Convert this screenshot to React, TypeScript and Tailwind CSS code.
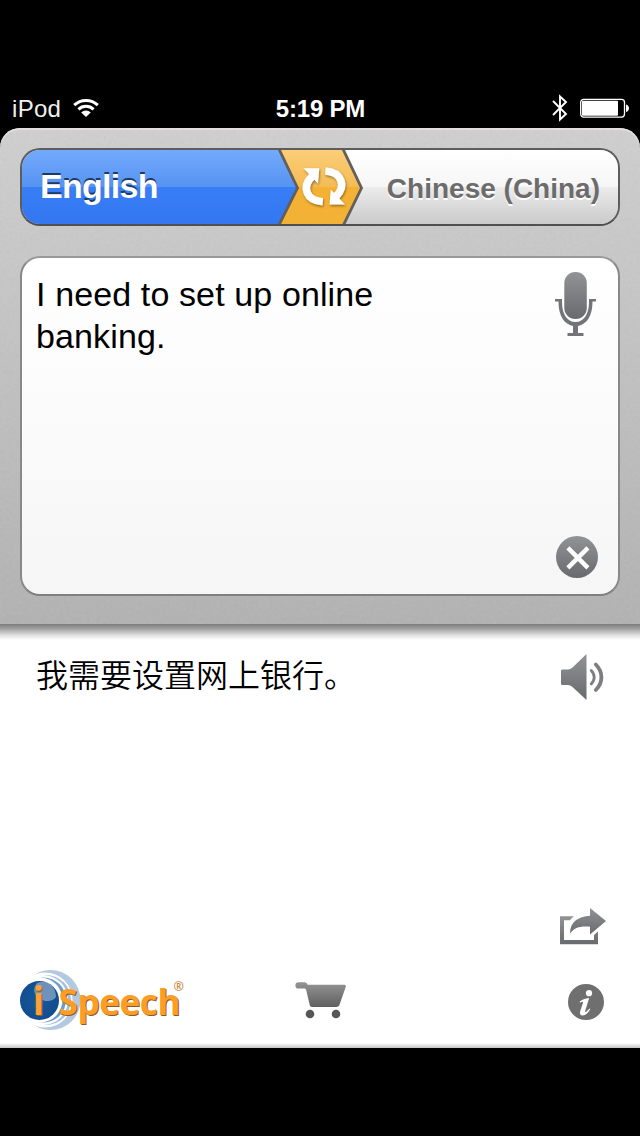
import type { ReactNode } from 'react'

const IconGradient = ({ id }: { id: string }) => (
  <linearGradient id={id} x1="0" y1="0" x2="0" y2="1">
    <stop offset="0" stopColor="#929395" />
    <stop offset="1" stopColor="#696a6d" />
  </linearGradient>
)

const StatusBar = () => {
  return (
    <header className="grid h-[40px] grid-cols-3 items-center text-[24px] leading-none text-white">
      <div className="flex items-center pl-[12px]">
        <span className="pt-[2px] tracking-[0.3px] text-[#f0f0f0]">iPod</span>
        <svg className="ml-[12px] h-[20px] w-[26px]" viewBox="0 0 26 20">
          <path d="M1.2 7.2a17 17 0 0 1 23.6 0" fill="none" stroke="#fff" strokeWidth="3" />
          <path d="M5.4 11.4a11 11 0 0 1 15.2 0" fill="none" stroke="#fff" strokeWidth="3" />
          <path d="M13 19l-4.8-4.5a7 7 0 0 1 9.6 0z" fill="#fff" />
        </svg>
      </div>

      <span className="pt-[2px] pl-[1px] text-center font-bold tracking-[-0.2px]">5:19 PM</span>

      <div className="flex items-center justify-end pr-[11px]">
        <svg className="h-[28px] w-[16px]" viewBox="0 0 16 28">
          <path
            d="M1 7l13 13-6 5.500V2.500l6 5.500L1 21"
            fill="none"
            stroke="#fff"
            strokeWidth="1.900"
          />
        </svg>
        <svg className="ml-[12px] h-[20px] w-[49px]" viewBox="0 0 49 20">
          <rect x="0.700" y="1.300" width="43.800" height="17.800" rx="3" fill="none" stroke="#fff" strokeWidth="1.300" />
          <rect x="2" y="2.700" width="36" height="15" rx="1" fill="#fff" />
          <path d="M46 6.500c4 1 4 6.600 0 7.600z" fill="#fff" />
        </svg>
      </div>
    </header>
  )
}

const SwapArrows = () => (
  <svg className="h-[74px] w-[86px] shrink-0" viewBox="0 0 86 74">
    <defs>
      <linearGradient id="blue" x1="0" y1="0" x2="0" y2="1">
        <stop offset="0" stopColor="#73aafc" />
        <stop offset="0.5" stopColor="#5693f1" />
        <stop offset="0.5" stopColor="#377ef7" />
        <stop offset="1" stopColor="#3477f0" />
      </linearGradient>
      <linearGradient id="silver" x1="0" y1="0" x2="0" y2="1">
        <stop offset="0" stopColor="#ffffff" />
        <stop offset="0.5" stopColor="#f6f6f6" />
        <stop offset="0.5" stopColor="#ececec" />
        <stop offset="1" stopColor="#cacaca" />
      </linearGradient>
      <linearGradient id="orange" x1="0" y1="0" x2="0" y2="1">
        <stop offset="0" stopColor="#fbce78" />
        <stop offset="0.5" stopColor="#f4bb55" />
        <stop offset="0.5" stopColor="#f4b133" />
        <stop offset="1" stopColor="#f2b237" />
      </linearGradient>
      <filter id="drop" x="-20%" y="-20%" width="140%" height="140%">
        <feDropShadow dx="0.800" dy="1.500" stdDeviation="0.800" floodColor="#6b4a10" floodOpacity="0.700" />
      </filter>
    </defs>
    <rect width="40" height="74" fill="url(#blue)" />
    <rect x="40" width="46" height="74" fill="url(#silver)" />
    <path d="M1.500 0h64l18 38-17.500 36H1.500l18-36z" fill="url(#orange)" />
    <path
      d="M0.500-2l19 40-19 38M64.500-2l19 40L65 76"
      fill="none"
      stroke="#625f5c"
      strokeWidth="2.800"
    />
    <g filter="url(#drop)" fill="none" stroke="#fff" strokeWidth="7.600">
      <path d="M44.800 51.800C28 50.500 23.500 37 34 26.500" />
      <path d="M47.400 21C64 22.300 68.500 36 58 46.500" />
      <path d="M25.500 18.200h15.800L40 33.500z" fill="#fff" stroke="none" />
      <path d="M67 54.600H51.500L52.800 39.500z" fill="#fff" stroke="none" />
    </g>
  </svg>
)

const LanguageBar = () => {
  return (
    <div className="flex h-[78px] overflow-hidden rounded-[20px] border-2 border-[#5d5d5d] border-b-[#505050]">
      <button className="w-[256px] bg-[linear-gradient(#73aafc_0%,#5693f1_50%,#377ef7_50%,#3477f0_100%)] pb-[3px] pl-[18px] text-left text-[34px] leading-[70px] font-bold tracking-[-0.7px] text-white [text-shadow:0_-2px_0_#1c3a68]">
        English
      </button>
      <SwapArrows />
      <button className="flex-1 bg-[linear-gradient(#ffffff_0%,#f6f6f6_50%,#ececec_50%,#cacaca_100%)] pt-[3px] pr-[18px] text-right text-[28px] leading-[71px] font-bold whitespace-nowrap text-[#6c6c6c] [text-shadow:0_2px_0_#ffffff]">
        Chinese (China)
      </button>
    </div>
  )
}

const MicIcon = () => (
  <svg className="mr-[2px] h-[66px] w-[42px]" viewBox="0 0 42 66">
    <defs>
      <IconGradient id="mic" />
    </defs>
    <rect x="10.300" y="1" width="22.500" height="47" rx="11" fill="url(#mic)" />
    <path d="M1 28h7v3c0 12 5 20 13.500 20S35 43 35 31v-3h7v2.500h-3.500C38.500 45 33 53 24 55v7h5.500v3h-16v-3H19v-7C10 53 4.500 45 4.500 30.500H1z" fill="#737477" />
  </svg>
)

const ClearIcon = () => (
  <svg className="h-[42px] w-[42px]" viewBox="0 0 42 42">
    <defs>
      <IconGradient id="clear" />
    </defs>
    <circle cx="21" cy="21" r="21" fill="url(#clear)" />
    <path d="M11.900 11.900l20 20M31.900 11.900l-20 20" stroke="#fff" strokeWidth="4.400" />
  </svg>
)

const SpeakerIcon = () => (
  <svg className="h-[48px] w-[44px]" viewBox="0 0 44 48">
    <defs>
      <IconGradient id="speaker" />
    </defs>
    <path d="M2.500 16.500H8c2 0 3.500-1 5-2.500L26.500 1v46L13 34.500c-1.500-1.500-3-2.500-5-2.500H2.500c-1 0-1.500-.5-1.500-1.500V18c0-1 .5-1.500 1.500-1.500z" fill="url(#speaker)" />
    <path d="M31.200 17.500c4 4 4 9.500 0 13.500" fill="none" stroke="#7d7e80" strokeWidth="2.800" strokeLinecap="round" />
    <path d="M35.800 11.500c7.500 7.500 7.500 18 0 25.500" fill="none" stroke="#7d7e80" strokeWidth="3.800" strokeLinecap="round" />
  </svg>
)

const ShareIcon = () => (
  <svg className="h-[37px] w-[47px]" viewBox="0 0 47 37">
    <defs>
      <IconGradient id="share" />
    </defs>
    <path
      d="M0 8.300h14c-1.800 1.200-3 2.500-3.800 3.900H4v19.900h30v-5l4-3.600v12.700H0z"
      fill="url(#share)"
    />
    <path d="M30 0l16 13-16 13.500v-7.700c-10-.8-15.500.8-20 6.700C10 14 18 8.500 30 7.800z" fill="url(#share)" />
  </svg>
)

const InfoIcon = () => (
  <svg className="h-[36px] w-[36px]" viewBox="0 0 36 36">
    <circle cx="18" cy="18" r="18" fill="#6f6f6f" />
    <circle cx="21" cy="9.200" r="3.100" fill="#fff" />
    <path
      d="M11.600 17.800c2.600-2.400 5.200-3.300 9.600-3.800l-4 12.700c-.4 1.400.4 1.500 1.400.7l2.900-3 .8.700c-2.200 4-4.700 6.400-7.600 6.400-2.400 0-3.300-1.500-2.500-4.200l2.700-8.400c.4-1.300-.5-1.500-2.900-.2z"
      fill="#fff"
    />
  </svg>
)

const CartIcon = () => (
  <svg className="h-[38px] w-[52px]" viewBox="0 0 52 38">
    <defs>
      <linearGradient id="cart" x1="0" y1="0" x2="0" y2="1">
        <stop offset="0" stopColor="#949494" />
        <stop offset="1" stopColor="#606060" />
      </linearGradient>
    </defs>
    <path d="M3.500 1.300h6c1.500 0 2.500 1.200 3.200 2.400h36.500c1.500 0 2 1 1.500 2.200l-6 17.400c-.6 1.800-1.700 2.700-3.500 2.700H18c-2 0-3-.8-3.400-2.600L11.300 9.500C11 8.100 10.500 7.500 9 7.500H3.500a3.100 3.100 0 0 1 0-6.200z" fill="url(#cart)" />
    <circle cx="15" cy="33" r="4.300" fill="#565656" />
    <circle cx="41" cy="33" r="4.300" fill="#565656" />
  </svg>
)

const Logo = () => (
  <svg className="h-[64px] w-[168px]" viewBox="0 0 168 64" fontFamily="'Open Sans', sans-serif">
    <defs>
      <radialGradient id="globe" cx="0.5" cy="0.5" r="0.55">
        <stop offset="0" stopColor="#17589c" />
        <stop offset="1" stopColor="#114c8d" />
      </radialGradient>
    </defs>
    <circle cx="30.500" cy="32" r="30" fill="#b3c9e1" />
    <circle cx="25" cy="32" r="27.500" fill="#fff" />
    <circle cx="26" cy="32" r="25" fill="#a3bfdb" />
    <circle cx="23" cy="32" r="25" fill="#fff" />
    <circle cx="23.500" cy="32" r="22.500" fill="#6f9cc6" />
    <circle cx="20" cy="32" r="22.500" fill="#fff" />
    <circle cx="19.500" cy="32.500" r="19.500" fill="url(#globe)" />
    <path d="M17 15c10-4 19 3 19 14-3 5-11 5-16 2-6-4-8-10-3-16z" fill="#fff" fillOpacity="0.380" />
    <g fontWeight="700" className="[text-shadow:1px_1px_0_#8a5a20]">
      <text x="12.800" y="47" fontSize="39" textLength="11.500" lengthAdjust="spacingAndGlyphs" fill="#fba03a">
        i
      </text>
      <text x="38.500" y="46.700" fontSize="35" textLength="122" fill="#fd9d25">
        Speech
      </text>
    </g>
    <text x="153.600" y="22.800" fontSize="12.500" fill="#c98436" fontWeight="600">
      ®
    </text>
  </svg>
)

const IconButton = ({ label, children }: { label: string; children: ReactNode }) => (
  <button aria-label={label} className="block shrink-0">
    {children}
  </button>
)

// fine paper grain on the grey panel
const Grain = () => (
  <svg className="pointer-events-none absolute inset-0 h-full w-full opacity-[0.100]">
    <filter id="grain">
      <feTurbulence type="fractalNoise" baseFrequency="0.300" numOctaves="2" />
      <feColorMatrix type="saturate" values="0" />
    </filter>
    <rect width="100%" height="100%" filter="url(#grain)" />
  </svg>
)

export default function App() {
  return (
    <div className="h-[1136px] w-[640px] bg-black pt-[88px] font-['Liberation_Sans',Arial,sans-serif]">
      <StatusBar />

      <section className="relative h-[496px] overflow-hidden rounded-t-[20px] bg-linear-to-b from-[#d0d0d0] to-[#b2b2b2] px-[20px] pt-[20px] shadow-[inset_0_2px_0_#e4e0e2]">
        <Grain />
        <div className="relative">
          <LanguageBar />

          <div className="mt-[30px] flex h-[340px] justify-between rounded-[20px] border-2 border-[#888888] border-t-[#999999] border-b-[#808080] bg-linear-to-b from-white to-[#f6f6f6] pt-[13px] pr-[20px] pb-[16px] pl-[14px]">
            <p className="w-[400px] pt-[2px] text-[34px] leading-[42px] tracking-[0.12px] text-black">
              I need to set up online banking.
            </p>
            <div className="flex flex-col items-end justify-between">
              <IconButton label="Speak">
                <MicIcon />
              </IconButton>
              <IconButton label="Clear">
                <ClearIcon />
              </IconButton>
            </div>
          </div>
        </div>
      </section>

      <section className="flex h-[424px] flex-col bg-white">
        <div className="h-[16px] shrink-0 bg-[linear-gradient(#7c7c7c,#a0a0a0_30%,#e0e0e0_70%,#ffffff)]" />

        <div className="flex h-[61px] justify-between pt-[13px] pr-[36px] pl-[36px]">
          <p className="-mt-[3px] font-['Noto_Sans_CJK_SC',sans-serif] text-[32px] leading-[46px] font-[350] text-black">
            我需要设置网上银行。
          </p>
          <IconButton label="Play">
            <SpeakerIcon />
          </IconButton>
        </div>

        <div className="mt-auto flex justify-end pr-[33px]">
          <IconButton label="Share">
            <ShareIcon />
          </IconButton>
        </div>

        <footer className="mt-[23px] flex h-[75px] items-start justify-between pr-[36px] pl-[20px]">
          <Logo />
          <div className="-ml-[2px] pt-[13px] pr-[112px]">
            <IconButton label="Store">
              <CartIcon />
            </IconButton>
          </div>
          <div className="pt-[16px]">
            <IconButton label="Info">
              <InfoIcon />
            </IconButton>
          </div>
        </footer>
        <div className="h-[5px] shrink-0 bg-linear-to-b from-white to-[#c4c4c4]" />
      </section>
    </div>
  )
}
